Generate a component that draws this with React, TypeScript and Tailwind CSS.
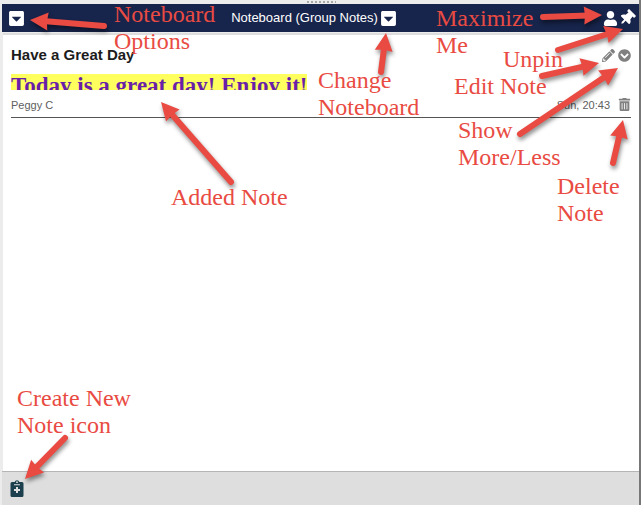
import { FaUser, FaThumbtack, FaPencilAlt, FaChevronCircleDown, FaTrashAlt, FaCaretSquareDown } from "react-icons/fa";

type ArrowProps = { from: [number, number]; to: [number, number] };

// Red callout arrow, the tip lands on "to"
function Arrow({ from, to }: ArrowProps) {
    const dx = to[0] - from[0];
    const dy = to[1] - from[1];
    const len = Math.hypot(dx, dy);
    const angle = (Math.atan2(dy, dx) * 180) / Math.PI;
    return (
        <g transform={`translate(${from[0]} ${from[1]}) rotate(${angle})`}>
            <line x1="0" y1="0" x2={len - 13} y2="0" stroke="#e94b43" strokeWidth="6" strokeLinecap="round" />
            <path d={`M${len} 0 L${len - 18} -9 L${len - 17} 0 L${len - 18} 9 Z`} fill="#e94b43" />
        </g>
    );
}

function Arrows({ items }: { items: ArrowProps[] }) {
    return (
        <svg width="100%" height="100%" className="absolute inset-0 overflow-visible drop-shadow-[1px_3px_2px_rgba(0,0,0,0.45)]" aria-hidden="true">
            {items.map((item, i) => (
                <Arrow key={i} from={item.from} to={item.to} />
            ))}
        </svg>
    );
}

function ClipboardPlus() {
    return (
        <svg width="14" height="17" viewBox="0 0 14 17" aria-hidden="true">
            <path fill="#1b3f4d" d="M2 2h2.7a2.4 2.4 0 0 1 4.6 0H12a1.5 1.5 0 0 1 1.5 1.5v12A1.5 1.5 0 0 1 12 17H2a1.5 1.5 0 0 1-1.5-1.5v-12A1.5 1.5 0 0 1 2 2z" />
            <circle cx="7" cy="2.2" r="0.9" fill="#dedede" />
            <path fill="#dedede" d="M4 4.3h6v1H4zM6 7h2v2h2v2H8v2H6v-2H4V9h2z" />
        </svg>
    );
}

export default function App() {
    return (
        <div className="relative min-h-screen flex flex-col bg-[#ececec] pl-[2px] border-r-2 border-[#777777] font-['Liberation_Sans',Arial,sans-serif]">
            {/* Grip */}
            <div className="h-1 flex justify-center">
                <div className="w-[30px] bg-[radial-gradient(#a8a8a8_1px,transparent_1px)] bg-[size:4px_4px]" />
            </div>

            <header className="h-7 bg-[#17244b] text-white flex items-center justify-between pl-1.5 pr-1">
                <button type="button" aria-label="Noteboard options" className="text-[17px]">
                    <FaCaretSquareDown />
                </button>
                <div className="flex items-center gap-0.5 text-[13px]">
                    <span>Noteboard (Group Notes)</span>
                    <button type="button" aria-label="Change noteboard" className="text-[17px]">
                        <FaCaretSquareDown />
                    </button>
                </div>
                <div className="flex items-center gap-px">
                    <button type="button" aria-label="Maximize me" className="text-[15px]">
                        <FaUser />
                    </button>
                    <button type="button" aria-label="Unpin" className="text-[16px] rotate-45">
                        <FaThumbtack />
                    </button>
                </div>
            </header>

            <main className="grow bg-white border-t-2 border-[#dddddd] mt-px ml-px px-2">
                <article className="border-b border-[#555555] pt-2.5 pb-1.5">
                    <div className="flex items-center justify-between">
                        <h1 className="text-[15px] leading-5 font-bold text-[#1c1c1c]">Have a Great Day</h1>
                        <div className="flex items-center gap-[3px] text-[13px] text-[#808080]">
                            <button type="button" aria-label="Edit note">
                                <FaPencilAlt />
                            </button>
                            <button type="button" aria-label="Show more or less">
                                <FaChevronCircleDown />
                            </button>
                        </div>
                    </div>
                    <div className="mt-[9px] h-4 overflow-hidden">
                        <p className="inline-block bg-[#ffff5e] text-[#6a1fa8] text-[23px] leading-6 font-bold font-['Liberation_Serif',serif]">
                            Today is a great day! Enjoy it!
                        </p>
                    </div>
                    <div className="mt-2 flex items-center justify-between text-[11px] leading-3 text-[#606060]">
                        <span>Peggy C</span>
                        <div className="flex items-center gap-2">
                            <time>Sun, 20:43</time>
                            <button type="button" aria-label="Delete note" className="text-[13px] text-[#808080]">
                                <FaTrashAlt />
                            </button>
                        </div>
                    </div>
                </article>
            </main>

            <footer className="h-[34px] bg-[#dedede] border-t border-[#b5b5b5] flex items-center px-2">
                <button type="button" aria-label="Create new note">
                    <ClipboardPlus />
                </button>
            </footer>

            {/* Callouts over the board */}
            <div className="absolute inset-0 pointer-events-none text-[24px] leading-[27px] text-[#e94b43] font-['Liberation_Serif',serif]">
                <div className="absolute top-0 left-0 w-[430px] h-[220px]">
                    <Arrows
                        items={[
                            { from: [104, 26], to: [30, 20] },
                            { from: [381, 72], to: [386, 33] },
                            { from: [231, 182], to: [161, 102] },
                        ]}
                    />
                    <p className="absolute left-[114px] top-[1px]">Noteboard<br />Options</p>
                    <p className="absolute left-[318px] top-[67px]">Change<br />Noteboard</p>
                    <p className="absolute left-[171px] top-[184px]">Added Note</p>
                </div>
                <div className="absolute top-0 right-0 w-[203px] h-[230px]">
                    <Arrows
                        items={[
                            { from: [107, 17], to: [166, 15] },
                            { from: [122, 50], to: [187, 29] },
                            { from: [106, 76], to: [163, 63] },
                            { from: [84, 134], to: [182, 68] },
                            { from: [177, 163], to: [187, 120] },
                        ]}
                    />
                    <p className="absolute left-0 top-[5px]">Maximize<br />Me</p>
                    <p className="absolute left-[67px] top-[46px]">Unpin</p>
                    <p className="absolute left-[18px] top-[73px]">Edit Note</p>
                    <p className="absolute left-[22px] top-[117px]">Show<br />More/Less</p>
                    <p className="absolute left-[121px] top-[173px]">Delete<br />Note</p>
                </div>
                <div className="absolute bottom-0 left-0 w-[200px] h-[130px]">
                    <Arrows items={[{ from: [65, 63], to: [25, 104] }]} />
                    <p className="absolute left-[17px] top-[10px]">Create New<br />Note icon</p>
                </div>
            </div>
        </div>
    );
}
